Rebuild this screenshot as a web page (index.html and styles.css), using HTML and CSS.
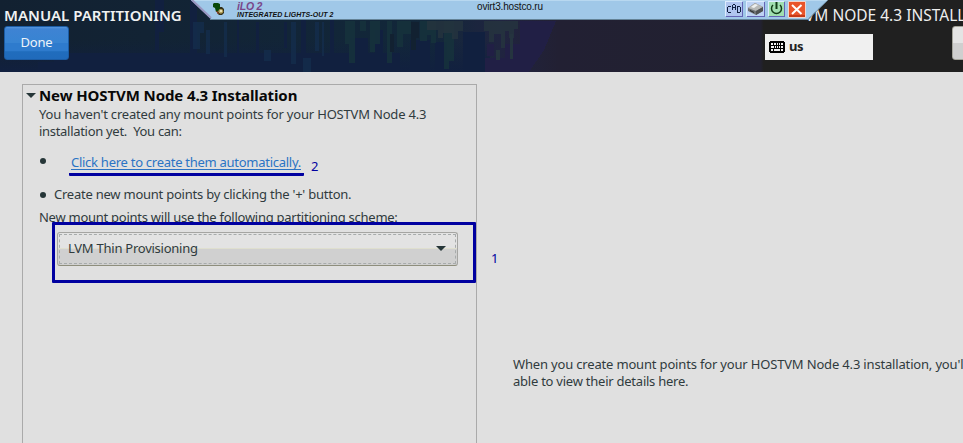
FILE: index.html
```html
<!DOCTYPE html>
<html lang="en">
<head>
<meta charset="utf-8">
<title>Manual Partitioning</title>
<link rel="stylesheet" href="styles.css">
</head>
<body>
<header class="header">
  <svg class="art" width="963" height="72" shape-rendering="crispEdges" aria-hidden="true">
    <defs>
      <linearGradient id="base" x1="0" x2="1" y1="0" y2="0">
        <stop offset="0" stop-color="#122131"/><stop offset=".45" stop-color="#12273a"/><stop offset=".52" stop-color="#202440"/><stop offset=".58" stop-color="#222033"/><stop offset=".79" stop-color="#222130"/><stop offset=".793" stop-color="#202020"/>
      </linearGradient>
      <linearGradient id="low" x1="0" x2="0" y1="0" y2="1">
        <stop offset="0" stop-color="#11203f" stop-opacity="0"/><stop offset="1" stop-color="#11203f"/>
      </linearGradient>
    </defs>
    <path fill="url(#base)" d="M0 0H963V72H0z"/>
    <path fill="url(#low)" d="M0 40H490V72H0z"/>
    <path fill="#11203f" d="M54 53H400V72H38V62H54zM155 0h9v32h-5v18h-4zM190 0h7v72h-7zM237 20h2v52h-2zM256 22h3v50h-3zM284 22h3v26h-3zM301 20h5v38h-5zM330 20h4v33h-4zM350 38h18v34h-18zM375 30h8v42h-8zM410 40h20v32h-20zM435 42h12v30h-12zM463 32h22v40h-22z"/>
    <path fill="#142e4d" d="M193 22h11v11h-4v16h-7zM206 30h4v24h-4zM224 22h3v35h-3zM264 50h7v11h-7zM291 22h5v42h-5zM303 58h8v14h-8zM315 22h4v29h-4zM322 22h2v34h-2z" opacity=".75"/>
    <path fill="#17333c" d="M345 21h10v42h-6V44h-4zM360 21h6v10h-6zM370 21h10v23h-5v8h-5zM387 21h5v42h-5zM397 21h14v13h-8v13h-6zM420 21h16v22h-5v-8h-4v6h-7zM444 21h10v40h-5v8h-5z" opacity=".8"/>
    <path fill="#25343f" d="M427 21h36v10h-5v8h-6v-6h-9v5h-5v-8h-11zM484 21h34v8h-4v9h-5v-7h-4v17h-4V34h-7v8h-5V31h-5z" opacity=".8"/>
    <path fill="#211f45" d="M487 44h7v12h-7zM520 21h36l-12 29-15 22h-44V58h20V44h15z"/>
    <path fill="#25343f" d="M496 50h4v10h-4zM510 34h3v25h-3z"/>
    <path fill="#122131" d="M411 22h8v16h-3v12h-5zM390 34h4v18h-4z"/>
  </svg>
  <div class="title-block">
    <h1 class="title">MANUAL PARTITIONING</h1>
    <button class="done">Done</button>
  </div>
  <div class="install-block">
    <div class="install-title">VM NODE 4.3 INSTALL</div>
    <div class="install-row">
      <div class="keyboard">
        <svg width="16" height="12" viewBox="0 0 16 12" shape-rendering="crispEdges">
          <path d="M1 0h14v1h1v10h-1v1H1v-1H0V1h1z"/>
          <path fill="#f0f0f0" d="M2 2h2v2H2zM5 2h2v2H5zM8 2h1v2H8zM10 2h1v2h-1zM12 2h2v2h-2zM2 5h3v2H2zM6 5h1v2H6zM8 5h1v2H8zM10 5h1v2h-1zM12 5h2v2h-2zM2 8h2v2H2zM5 8h6v2H5zM12 8h2v2h-2z"/>
        </svg>
        <span class="layout">us</span>
      </div>
      <button class="help" aria-label="Help"></button>
    </div>
  </div>
</header>

<div class="remote-bar">
  <svg class="bar-shape" width="650" height="21" aria-hidden="true">
    <path fill="#a0c8e8" d="M11 0H648L628 19H31z"/>
    <path fill="#b8d8f0" d="M11 0H648L647 1H12z"/>
    <path fill="none" stroke="#9894bf" stroke-width="2" d="M12 0L31 18"/>
    <path fill="none" stroke="#648397" d="M30 19.5H628L648 0"/>
  </svg>
  <svg class="lamp" width="13" height="14" viewBox="0 0 13 14">
    <path fill="#333018" d="M6 5h4l2 2v4l-2 2H7l-2-2z"/>
    <path fill="#084808" d="M2 1h4l2 1v5L5 10H4L3 6 1 5V2z"/>
    <circle cx="8.800" cy="9.300" r="2.400" fill="#b6a35a"/>
    <path fill="#e6dfb4" d="M8 8h2v2H8z"/>
    <path fill="#a43d24" d="M4 9h1l2 3H6z"/>
  </svg>
  <div class="brand"><span class="ilo">iLO 2</span><span class="lights">INTEGRATED LIGHTS-OUT 2</span></div>
  <div class="host">ovirt3.hostco.ru</div>
  <div class="tools">
    <svg width="18" height="16" viewBox="0 0 18 16" shape-rendering="crispEdges">
      <path fill="#b0c5ef" d="M0 0h18v16H0z"/><path fill="#6565b5" d="M17 1h1v15H1v-1h16z"/><path fill="#dcecff" d="M0 0h17v1H1v14H0z"/>
      <path fill="none" stroke="#102040" d="M6 5.500H3M2.500 6v5M3 11.500H6M7.500 9V4M8 3.500h2M10.500 4v5M8 6.500h2M12.500 5v7M13 5.500h2M15.500 6v5M13 11.500h2"/>
    </svg>
    <svg width="19" height="16" viewBox="0 0 19 16">
      <path fill="#bed3f4" d="M0 0h19v16H0z"/><path fill="#6565b5" d="M18 1h1v15H1v-1h17z"/><path fill="#dcecff" d="M0 0h18v1H1v14H0z"/>
      <path fill="#6f7274" d="M2 7l7-5 8 4v4l-7 4-8-4z"/><path fill="#b7b9b7" d="M2 7l7-5 8 4-7 4z"/><path fill="#4e5153" d="M10 10l7-4v4l-7 4z"/><path fill="#eef0ef" d="M5 6l4-3 3 1-4 3z"/><path fill="#242829" d="M4 9l4 2v1L4 10z"/>
    </svg>
    <svg width="17" height="16" viewBox="0 0 17 16">
      <path fill="#a0dfb0" d="M0 0h17v16H0z"/><path fill="#6565b5" d="M16 1h1v15H1v-1h15z"/><path fill="#dcecff" d="M0 0h16v1H1v14H0z"/>
      <path fill="none" stroke="#123d18" stroke-width="1.500" d="M5 4a5 5 0 1 0 7 0"/><path stroke="#123d18" stroke-width="2" d="M8.500 1v7"/>
    </svg>
    <svg width="18" height="17" viewBox="0 0 18 17">
      <rect width="18" height="17" rx="1" fill="#f2d4cb"/><path fill="#e9552b" d="M1 1h16v15H1z"/><path fill="#c83a16" d="M1 14h16v2H1z"/>
      <path fill="none" stroke="#fff" stroke-width="2" d="M4 4l9.500 9M13.500 4L4 13"/>
    </svg>
  </div>
</div>

<main class="main">
  <section class="panel">
    <h2 class="heading"><svg width="10" height="5" viewBox="0 0 10 5"><path fill="#263638" d="M0 0h10L5 5z"/></svg><span class="heading-text">New HOSTVM Node 4.3 Installation</span></h2>
    <div class="panel-content">
      <p class="intro"><span class="line l1">You haven't created any mount points for your HOSTVM Node 4.3</span><span class="line l2">installation yet.&nbsp; You can:</span></p>
      <div class="item auto"><i class="dot"></i><a class="auto-link"><span class="l3">Click here to create them automatically.</span></a><span class="two">2</span></div>
      <div class="item create"><i class="dot"></i><span class="l4">Create new mount points by clicking the '+' button.</span></div>
      <p class="scheme"><span class="l5">New mount points will use the following partitioning scheme:</span></p>
      <div class="select"><span class="l6">LVM Thin Provisioning</span><svg width="10" height="5" viewBox="0 0 10 5"><path fill="#263638" d="M0 0h10L5 5z"/></svg></div>
    </div>
    <div class="marker"></div>
  </section>
  <aside class="details">
    <div class="one">1</div>
    <p class="hint"><span class="line l7">When you create mount points for your HOSTVM Node 4.3 installation, you'll</span><span class="line l8">able to view their details here.</span></p>
  </aside>
</main>
</body>
</html>
```

FILE: styles.css
```css
* { box-sizing: border-box; }
html, body { margin: 0; width: 963px; height: 443px; overflow: hidden; }
body { background: #e0e0e0; color: #303b3e; font: 13px/17px "Noto Sans", sans-serif; position: relative; }
h1, h2, p { margin: 0; font-weight: 400; }
button { font-family: inherit; }
span { white-space: nowrap; }

.header { position: relative; height: 72px; display: flex; justify-content: space-between; background: #202020; overflow: hidden; }
.art { position: absolute; inset: 0; }
.title-block { position: relative; padding: 5px 0 0 4px; }
.title { font-size: 15px; line-height: 21px; font-weight: 600; letter-spacing: .01px; color: #f0f2f2; white-space: nowrap; }
.done { display: block; width: 65px; height: 34px; padding: 0 0 2px; border: 1px solid #1b5ca4; border-radius: 3px; font-size: 13px; letter-spacing: -.2px; color: #eef4fa; background: linear-gradient(#5796dc 0, #3e83d3 2px, #3784d2 50%, #2e7bcd 51%, #2e7bcd 75%, #206dbd 77%, #206abb 100%); }
.install-block { position: relative; width: 198px; padding-top: 5px; }
.install-title { margin-left: 40px; font-size: 15.5px; line-height: 21px; color: #eee; white-space: nowrap; }
.install-row { display: flex; justify-content: space-between; width: 250px; height: 34px; }
.keyboard { display: flex; align-items: center; gap: 4px; width: 108px; height: 26px; margin-top: 8px; padding-left: 4px; background: #f0f0f0; color: #222; }
.layout { font-weight: 700; font-size: 13px; letter-spacing: -.5px; margin-top: -1px; }
.help { width: 63px; height: 34px; border: 1px solid #a4a49b; border-radius: 3px; background: linear-gradient(#e4e4e4 49%, #cfcfcf 50%); }

.remote-bar { position: absolute; left: 180px; top: 0; width: 650px; height: 21px; display: flex; font-family: "Liberation Sans", sans-serif; color: #111; }
.bar-shape { position: absolute; inset: 0; overflow: visible; }
.remote-bar > :not(.bar-shape) { position: relative; }
.lamp { margin: 2px 0 0 32px; }
.brand { display: flex; flex-direction: column; width: 240px; margin-left: 12px; font-weight: 700; font-style: italic; }
.ilo { font-size: 10.5px; line-height: 11px; padding-top: 1px; letter-spacing: -.2px; color: #79468a; }
.lights { font-size: 7px; line-height: 7px; margin-top: -1px; letter-spacing: .04px; }
.host { width: 248px; font-size: 10px; line-height: 13px; letter-spacing: -.15px; }
.tools { display: flex; gap: 3px; padding-top: 1px; }

.main { display: grid; grid-template-columns: 455px 1fr; gap: 36px; height: 371px; padding: 12px 0 0 22px; }
.panel { position: relative; height: 380px; border: 1px solid #aaa; padding: 1px 0 0 3px; }
.heading { display: flex; align-items: center; gap: 3px; height: 18px; color: #080808; }
.heading-text { font-size: 15px; font-weight: 700; letter-spacing: -.1px; }
.panel-content { padding: 1px 0 0 13px; }
.line { display: block; }
.intro { padding-top: 1px; }
.l1 { letter-spacing: -.19px; }
.l2 { letter-spacing: -.3px; }
.l3 { letter-spacing: -.27px; }
.l4 { letter-spacing: -.235px; }
.l5 { letter-spacing: -.26px; }
.l6 { letter-spacing: -.25px; }
.l7 { letter-spacing: -.17px; }
.l8 { letter-spacing: -.24px; }
.item { display: flex; }
.dot { width: 6px; height: 6px; margin-top: 6px; margin-left: 1px; border-radius: 50%; background: #263638; }
.auto { margin-top: 13px; height: 22px; }
.auto .dot { margin-top: 5px; }
.auto-link { width: 235px; height: 22px; margin: 1px 0 0 23px; padding-left: 2px; color: #2b74c4; border-bottom: 3px solid #0000a0; border-radius: 1px; }
.auto-link span { display: inline-block; height: 16px; border-bottom: 1px solid #2b74c4; }
.two { margin: 5px 0 0 7px; color: #0000a0; }
.create { margin-top: 11px; gap: 8px; }
.create .dot { margin-top: 6px; }
.scheme { margin-top: 6px; }
.select { display: flex; align-items: center; justify-content: space-between; width: 401px; height: 34px; margin: 6px 0 0 18px; padding: 0 11px 2px 10px; border: 1px solid #a5a5a2; border-bottom-color: #8e8e7c; border-radius: 3px; outline: 1px dashed #a7abab; outline-offset: -3px; background: linear-gradient(#e3e3e3 0 47%, #dfdfcf 48% 50%, #d0d0d0 51%); }
.marker { position: absolute; left: 29px; top: 137px; width: 424px; height: 61px; border: 3px solid #0000a0; border-radius: 1px; }
.details { margin-left: -24px; padding: 166px 0 0 24px; overflow: hidden; }
.one { margin-left: -22px; color: #0000a0; }
.hint { padding-top: 89px; }
```
